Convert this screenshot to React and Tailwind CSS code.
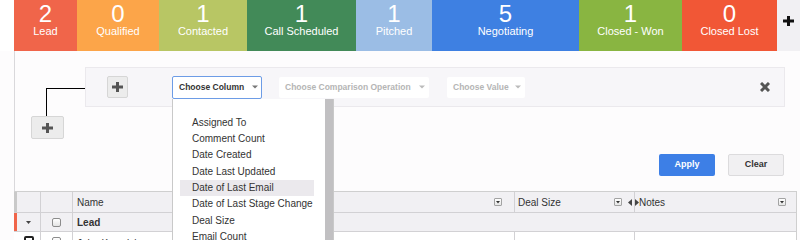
import React from 'react';

const stages = [
  { n: 2, label: 'Lead', cls: 'w-[63px] bg-[#f0654a]' },
  { n: 0, label: 'Qualified', cls: 'w-[82px] bg-[#fca549]' },
  { n: 1, label: 'Contacted', cls: 'w-[88px] bg-[#b8c664]' },
  { n: 1, label: 'Call Scheduled', cls: 'w-[109px] bg-[#428a58]' },
  { n: 1, label: 'Pitched', cls: 'w-[76px] bg-[#9bbde5]' },
  { n: 5, label: 'Negotiating', cls: 'w-[147px] bg-[#3e80e2]' },
  { n: 1, label: 'Closed - Won', cls: 'w-[103px] bg-[#89b541]' },
  { n: 0, label: 'Closed Lost', cls: 'w-[95px] bg-[#f15736]' },
];

const columns = [
  'Assigned To',
  'Comment Count',
  'Date Created',
  'Date Last Updated',
  'Date of Last Email',
  'Date of Last Stage Change',
  'Deal Size',
  'Email Count',
];

function Plus({ color = '#555', size = 11 }) {
  return (
    <svg width={size} height={size - 1} viewBox="0 0 11 10">
      <rect x="4" y="0" width="3" height="10" fill={color} />
      <rect x="0" y="3.5" width="11" height="3" fill={color} />
    </svg>
  );
}

function Caret({ color = '#777' }) {
  return (
    <svg width="6" height="4" viewBox="0 0 6 4">
      <path d="M0 0.5 L6 0.5 L3 3.5 Z" fill={color} />
    </svg>
  );
}

function HeadMenu() {
  return (
    <span className="flex h-[8px] w-[8px] items-center justify-center rounded-[1px] border border-[#a3a3a3] bg-gradient-to-b from-white to-[#e6e6e6]">
      <svg width="4" height="3" viewBox="0 0 4 3">
        <path d="M0 0 L4 0 L2 2.5 Z" fill="#333" />
      </svg>
    </span>
  );
}

function Check() {
  return <span className="block h-[9px] w-[9px] rounded-[2px] border border-[#8c8c8c] bg-gradient-to-b from-white to-[#e4e4e4]" />;
}

export default function App() {
  return (
    <div className="h-[240px] w-[800px] overflow-hidden bg-[#fdfcfd] font-['Liberation_Sans',Arial,sans-serif] text-[#333]">
      {/* stage bar */}
      <div className="flex h-[51px]">
        <div className="w-[14px] bg-white" />
        {stages.map((s) => (
          <div key={s.label} className={`flex flex-col items-center text-white ${s.cls}`}>
            <span className="text-[24px] leading-[27px]">{s.n}</span>
            <span className="-mt-[2px] text-[11px] leading-[13px]">{s.label}</span>
          </div>
        ))}
        <div className="flex w-[23px] justify-center bg-[#f1f0f3] pt-[16px]">
          <Plus color="#111" />
        </div>
      </div>

      {/* filter builder */}
      <div className="relative ml-[14px] h-[140px] border-l border-[#d9d8db]">
        <div className="absolute left-[31px] top-[37px] h-[28px] w-[39px] border-l border-t border-black" />

        <div className="pt-[16px]">
          <div className="ml-[70px] flex h-[40px] w-[700px] items-center border border-[#ebe9ed] bg-[#f7f6f9] pl-[21px] pr-[14px]">
            <button className="flex h-[22px] w-[21px] items-center justify-center rounded-[2px] border border-[#d6d6d6] bg-[#ececec]">
              <Plus />
            </button>

            <div className="relative ml-[44px]">
              <div className="flex h-[23px] w-[90px] items-center justify-between rounded-[2px] border border-[#6d9ce6] bg-white pl-[6px] pr-[3px] text-[8.5px] font-bold">
                <span>Choose Column</span>
                <Caret />
              </div>
              <div className="absolute left-0 top-full z-10 h-[160px] w-[162px] border border-t-0 border-[#c9c9c9] bg-white pl-[7px] pt-[16px]">
                {columns.map((c) => (
                  <div
                    key={c}
                    className={`h-[16.4px] w-[134px] pl-[12px] text-[10px] leading-[16.4px] ${c === 'Date of Last Email' ? 'bg-[#ebe9ed]' : ''}`}
                  >
                    {c}
                  </div>
                ))}
                <div className="absolute right-0 top-0 h-full w-[8px] bg-[#c1c0c2]" />
              </div>
            </div>

            <div className="ml-[17px] flex h-[21px] w-[150px] items-center justify-between rounded-[2px] bg-white pl-[6px] pr-[4px] text-[8.5px] font-bold text-[#b5b5b5]">
              <span>Choose Comparison Operation</span>
              <Caret color="#bbb" />
            </div>

            <div className="ml-[18px] flex h-[21px] w-[78px] items-center justify-between rounded-[2px] bg-white pl-[6px] pr-[4px] text-[8.5px] font-bold text-[#b5b5b5]">
              <span>Choose Value</span>
              <Caret color="#bbb" />
            </div>

            <svg className="ml-auto" width="10" height="10" viewBox="0 0 10 10">
              <path d="M1 1 L9 9 M9 1 L1 9" stroke="#555" strokeWidth="3" />
            </svg>
          </div>

          <button className="ml-[16px] mt-[9px] flex h-[23px] w-[33px] items-center justify-center rounded-[2px] border border-[#d6d6d6] bg-[#ececec]">
            <Plus />
          </button>

          <div className="mr-[16px] mt-[15px] flex justify-end gap-[13px]">
            <button className="h-[22px] w-[56px] rounded-[2px] bg-[#3d7fe6] text-[9px] font-bold text-white">Apply</button>
            <button className="h-[22px] w-[56px] rounded-[2px] border border-[#dcdbdd] bg-[#f1f0f2] text-[9px] font-bold text-[#333]">Clear</button>
          </div>
        </div>
      </div>

      {/* grid */}
      <div className="ml-[14px] w-[783px] border-r border-t border-[#cfcfcf] text-[10px]">
        <div className="flex h-[21px] border-b border-[#d2d1d4] bg-[#f1f0f3]">
          <div className="w-[3px] bg-[#c9c9c9]" />
          <div className="w-[24px] border-r border-[#d2d1d4]" />
          <div className="w-[32px] border-r border-[#d2d1d4]" />
          <div className="flex w-[442px] items-center justify-between border-r border-[#d2d1d4] pl-[4px] pr-[12px]">
            <span>Name</span>
            <HeadMenu />
          </div>
          <div className="flex w-[120px] items-center border-r border-[#d2d1d4] pl-[3px]">
            <span>Deal Size</span>
            <span className="ml-auto"><HeadMenu /></span>
            <svg className="ml-[6px]" width="6" height="7" viewBox="0 0 6 7">
              <path d="M0 3.5 L4 0 L4 7 Z" fill="#444" />
            </svg>
          </div>
          <div className="flex flex-1 items-center pl-[4px] pr-[10px]">
            <svg className="-ml-[4px]" width="4" height="7" viewBox="0 0 4 7">
              <path d="M4 3.5 L0 0 L0 7 Z" fill="#444" />
            </svg>
            <span>Notes</span>
            <span className="ml-auto"><HeadMenu /></span>
          </div>
        </div>

        <div className="flex h-[19px] border-b border-[#d2d1d4] bg-[#f1f0f3]">
          <div className="w-[3px] bg-[#f0654a]" />
          <div className="flex w-[24px] items-center justify-center border-r border-[#d2d1d4]">
            <svg width="5" height="3" viewBox="0 0 5 3">
              <path d="M0 0 L5 0 L2.5 3 Z" fill="#444" />
            </svg>
          </div>
          <div className="flex w-[32px] items-center justify-center border-r border-[#d2d1d4]">
            <Check />
          </div>
          <div className="flex items-center pl-[4px] font-bold">Lead</div>
        </div>

        <div className="flex h-[19px] bg-white">
          <div className="w-[3px]" />
          <div className="flex w-[24px] justify-center border-r border-[#d2d1d4] pt-[4px]">
            <span className="block h-[8px] w-[10px] rounded-[2px] border-2 border-[#222]" />
          </div>
          <div className="flex w-[32px] justify-center border-r border-[#d2d1d4] pt-[5px]">
            <Check />
          </div>
          <div className="w-[442px] border-r border-[#d2d1d4] pl-[4px] pt-[4px]">John Kosmicke</div>
          <div className="w-[120px] border-r border-[#d2d1d4]" />
          <div className="flex-1" />
        </div>
      </div>
    </div>
  );
}
